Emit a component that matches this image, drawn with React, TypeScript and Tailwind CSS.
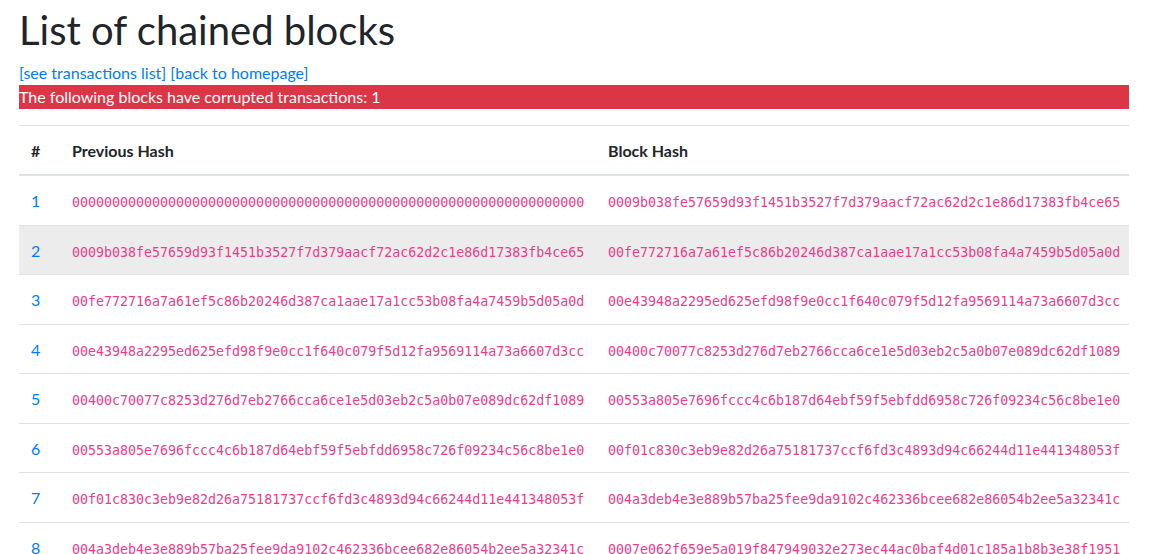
const blocks = [
  "0000000000000000000000000000000000000000000000000000000000000000",
  "0009b038fe57659d93f1451b3527f7d379aacf72ac62d2c1e86d17383fb4ce65",
  "00fe772716a7a61ef5c86b20246d387ca1aae17a1cc53b08fa4a7459b5d05a0d",
  "00e43948a2295ed625efd98f9e0cc1f640c079f5d12fa9569114a73a6607d3cc",
  "00400c70077c8253d276d7eb2766cca6ce1e5d03eb2c5a0b07e089dc62df1089",
  "00553a805e7696fccc4c6b187d64ebf59f5ebfdd6958c726f09234c56c8be1e0",
  "00f01c830c3eb9e82d26a75181737ccf6fd3c4893d94c66244d11e441348053f",
  "004a3deb4e3e889b57ba25fee9da9102c462336bcee682e86054b2ee5a32341c",
  "0007e062f659e5a019f847949032e273ec44ac0baf4d01c185a1b8b3e38f1951",
];

const rows = blocks.slice(1).map((hash, i) => ({
  n: i + 1,
  prev: blocks[i],
  hash,
}));

export default function App() {
  return (
    <div className="min-h-screen bg-white font-['Lato',sans-serif] text-[16px] leading-6 text-[#212529]">
      <div className="box-content w-[1110px] pl-[19px] pt-[6px]">
        <h1 className="mb-[7px] text-[40px] font-normal leading-[48px]">
          List of chained blocks
        </h1>
        <div className="text-[#007bff]">
          <a href="#">[see transactions list]</a>{" "}
          <a href="#">[back to homepage]</a>
        </div>
        <div className="bg-[#dc3545] text-white">
          The following blocks have corrupted transactions: 1
        </div>

        <table className="mt-4 w-full table-fixed border-collapse text-left">
          <colgroup>
            <col className="w-[41px]" />
            <col className="w-[536px]" />
            <col />
          </colgroup>
          <thead>
            <tr className="border-t border-[#dee2e6]">
              <th className="border-b-2 border-[#dee2e6] px-3 pt-[13px] pb-[11px] align-bottom font-bold">
                #
              </th>
              <th className="border-b-2 border-[#dee2e6] px-3 pt-[13px] pb-[11px] align-bottom font-bold">
                Previous Hash
              </th>
              <th className="border-b-2 border-[#dee2e6] px-3 pt-[13px] pb-[11px] align-bottom font-bold">
                Block Hash
              </th>
            </tr>
          </thead>
          <tbody>
            {rows.map((r) => (
              <tr
                key={r.n}
                className={`border-t border-[#dee2e6] ${r.n === 2 ? "bg-[#ececec]" : ""}`}
              >
                <td className="px-3 py-3">
                  <div className="h-[24.5px] leading-[25.5px]">
                    <a href="#" className="text-[#007bff]">
                      {r.n}
                    </a>
                  </div>
                </td>
                <td className="px-3 py-3">
                  <div className="h-[24.5px] leading-[25.5px]">
                    <code className="font-['DejaVu_Sans_Mono',monospace] text-[13.3px] text-[#e83e8c]">
                      {r.prev}
                    </code>
                  </div>
                </td>
                <td className="px-3 py-3">
                  <div className="h-[24.5px] leading-[25.5px]">
                    <code className="font-['DejaVu_Sans_Mono',monospace] text-[13.3px] text-[#e83e8c]">
                      {r.hash}
                    </code>
                  </div>
                </td>
              </tr>
            ))}
          </tbody>
        </table>
      </div>
    </div>
  );
}
